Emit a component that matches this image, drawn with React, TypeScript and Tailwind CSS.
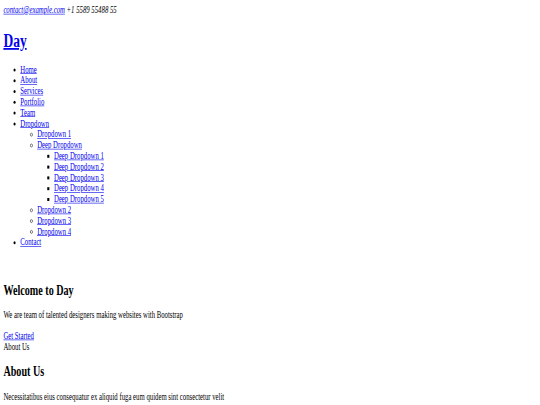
/*
 * Day — unstyled Bootstrap template page (no CSS loaded)
 * Rendered at 1280px wide with browser-default styles, then squashed to fit the frame
 */

const navItems = ["Home", "About", "Services", "Portfolio", "Team"];
const deepItems = ["Deep Dropdown 1", "Deep Dropdown 2", "Deep Dropdown 3", "Deep Dropdown 4", "Deep Dropdown 5"];

function A({ children, href = "#" }: { children: React.ReactNode; href?: string }) {
  return (
    <a href={href} className="text-[#0000ee] underline">
      {children}
    </a>
  );
}

export default function App() {
  return (
    <div className="w-[540px] h-[405px] overflow-hidden bg-white">
      <div
        className="w-[1280px] origin-top-left scale-x-[0.4219] scale-y-[0.6] px-2 pt-2 text-black text-[16px] leading-[normal]"
        style={{ fontFamily: '"Liberation Serif", "Times New Roman", serif' }}
      >
        {/* Topbar */}
        <section id="topbar">
          <div className="italic">
            <i>
              <A href="mailto:contact@example.com">contact@example.com</A>
            </i>{" "}
            <i>
              <span>+1 5589 55488 55</span>
            </i>
          </div>
        </section>

        {/* Header */}
        <header>
          <h1 className="mt-[22.7px] mb-[21.4px] text-[32px] font-bold leading-[normal]">
            <A>Day</A>
          </h1>
          <nav>
            <ul className="list-disc pl-10">
              {navItems.map((item) => (
                <li key={item}>
                  <A>{item}</A>
                </li>
              ))}
              <li>
                <A>Dropdown</A>
                <ul className="list-[circle] pl-10">
                  <li>
                    <A>Dropdown 1</A>
                  </li>
                  <li>
                    <A>Deep Dropdown</A>
                    <ul className="list-[square] pl-10">
                      {deepItems.map((item) => (
                        <li key={item}>
                          <A>{item}</A>
                        </li>
                      ))}
                    </ul>
                  </li>
                  <li>
                    <A>Dropdown 2</A>
                  </li>
                  <li>
                    <A>Dropdown 3</A>
                  </li>
                  <li>
                    <A>Dropdown 4</A>
                  </li>
                </ul>
              </li>
              <li>
                <A>Contact</A>
              </li>
            </ul>
          </nav>
        </header>

        {/* Hero */}
        <section id="hero">
          <h1 className="mt-[56.7px] text-[24px] font-bold leading-[normal]">Welcome to Day</h1>
          <h2 className="mt-[19.1px]">We are team of talented designers making websites with Bootstrap</h2>
          <div className="mt-[17px]">
            <A href="#about">Get Started</A>
          </div>
        </section>

        {/* About */}
        <main>
          <section id="about">
            <div>
              <span>About Us</span>
              <h2 className="mt-[19.6px] text-[24px] font-bold leading-[normal]">About Us</h2>
              <p className="mt-[19.2px]">
                Necessitatibus eius consequatur ex aliquid fuga eum quidem sint consectetur velit
              </p>
            </div>
          </section>
        </main>
      </div>
    </div>
  );
}
